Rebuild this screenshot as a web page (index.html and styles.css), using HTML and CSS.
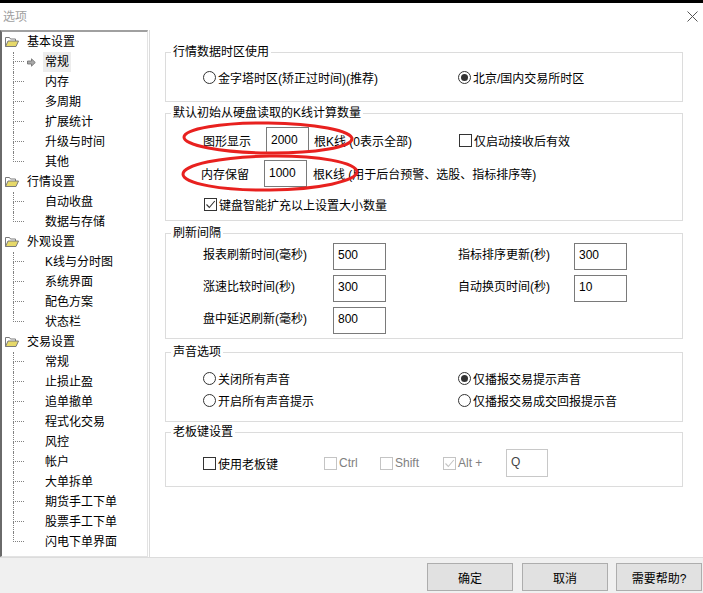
FILE: index.html
```html
<!DOCTYPE html>
<html lang="zh-CN">
<head>
<meta charset="utf-8">
<title>选项</title>
<link rel="stylesheet" href="styles.css">
</head>
<body>
<div class="topstrip"></div>
<div class="titlebar">
  <span class="title">选项</span>
  <svg class="close" width="11" height="11" viewBox="0 0 11 11"><path d="M0.5 0.5L10.5 10.5M10.5 0.5L0.5 10.5" stroke="#555" stroke-width="1" fill="none"/></svg>
</div>
<div class="main">
  <div class="tree">
    <div class="parent"><svg class="folder" width="14" height="10" viewBox="0 0 14 10"><path d="M0.5 9.5V0.5h4l1 1.5h5v2" fill="#fff" stroke="#7a7a7a"/><path d="M0.5 9.5L3 4h10.5L11 9.5z" fill="#e6d96a" stroke="#7a7a7a"/></svg>基本设置</div>
    <ul class="children">
      <li class="child"><span class="conn"><i></i><i></i></span><span class="ico"><svg width="9" height="9" viewBox="0 0 9 9"><path d="M0.5 3h4V0.8L8.3 4.5 4.5 8.2V6h-4z" fill="#a8a8a8" stroke="#6a6a6a" stroke-width="0.8"/></svg></span><span class="lbl sel">常规</span></li>
      <li class="child"><span class="conn"><i></i><i></i></span><span class="ico"></span><span class="lbl">内存</span></li>
      <li class="child"><span class="conn"><i></i><i></i></span><span class="ico"></span><span class="lbl">多周期</span></li>
      <li class="child"><span class="conn"><i></i><i></i></span><span class="ico"></span><span class="lbl">扩展统计</span></li>
      <li class="child"><span class="conn"><i></i><i></i></span><span class="ico"></span><span class="lbl">升级与时间</span></li>
      <li class="child last"><span class="conn"><i></i><i></i></span><span class="ico"></span><span class="lbl">其他</span></li>
    </ul>
    <div class="parent"><svg class="folder" width="14" height="10" viewBox="0 0 14 10"><path d="M0.5 9.5V0.5h4l1 1.5h5v2" fill="#fff" stroke="#7a7a7a"/><path d="M0.5 9.5L3 4h10.5L11 9.5z" fill="#e6d96a" stroke="#7a7a7a"/></svg>行情设置</div>
    <ul class="children">
      <li class="child"><span class="conn"><i></i><i></i></span><span class="ico"></span><span class="lbl">自动收盘</span></li>
      <li class="child last"><span class="conn"><i></i><i></i></span><span class="ico"></span><span class="lbl">数据与存储</span></li>
    </ul>
    <div class="parent"><svg class="folder" width="14" height="10" viewBox="0 0 14 10"><path d="M0.5 9.5V0.5h4l1 1.5h5v2" fill="#fff" stroke="#7a7a7a"/><path d="M0.5 9.5L3 4h10.5L11 9.5z" fill="#e6d96a" stroke="#7a7a7a"/></svg>外观设置</div>
    <ul class="children">
      <li class="child"><span class="conn"><i></i><i></i></span><span class="ico"></span><span class="lbl">K线与分时图</span></li>
      <li class="child"><span class="conn"><i></i><i></i></span><span class="ico"></span><span class="lbl">系统界面</span></li>
      <li class="child"><span class="conn"><i></i><i></i></span><span class="ico"></span><span class="lbl">配色方案</span></li>
      <li class="child last"><span class="conn"><i></i><i></i></span><span class="ico"></span><span class="lbl">状态栏</span></li>
    </ul>
    <div class="parent"><svg class="folder" width="14" height="10" viewBox="0 0 14 10"><path d="M0.5 9.5V0.5h4l1 1.5h5v2" fill="#fff" stroke="#7a7a7a"/><path d="M0.5 9.5L3 4h10.5L11 9.5z" fill="#e6d96a" stroke="#7a7a7a"/></svg>交易设置</div>
    <ul class="children">
      <li class="child"><span class="conn"><i></i><i></i></span><span class="ico"></span><span class="lbl">常规</span></li>
      <li class="child"><span class="conn"><i></i><i></i></span><span class="ico"></span><span class="lbl">止损止盈</span></li>
      <li class="child"><span class="conn"><i></i><i></i></span><span class="ico"></span><span class="lbl">追单撤单</span></li>
      <li class="child"><span class="conn"><i></i><i></i></span><span class="ico"></span><span class="lbl">程式化交易</span></li>
      <li class="child"><span class="conn"><i></i><i></i></span><span class="ico"></span><span class="lbl">风控</span></li>
      <li class="child"><span class="conn"><i></i><i></i></span><span class="ico"></span><span class="lbl">帐户</span></li>
      <li class="child"><span class="conn"><i></i><i></i></span><span class="ico"></span><span class="lbl">大单拆单</span></li>
      <li class="child"><span class="conn"><i></i><i></i></span><span class="ico"></span><span class="lbl">期货手工下单</span></li>
      <li class="child"><span class="conn"><i></i><i></i></span><span class="ico"></span><span class="lbl">股票手工下单</span></li>
      <li class="child last"><span class="conn"><i></i><i></i></span><span class="ico"></span><span class="lbl">闪电下单界面</span></li>
    </ul>
  </div>

  <div class="content">
    <fieldset class="grp g1">
      <legend>行情数据时区使用</legend>
      <div class="two">
        <label class="opt"><span class="radio"></span>金字塔时区(矫正过时间)(推荐)</label>
        <label class="opt"><span class="radio on"></span>北京/国内交易所时区</label>
      </div>
    </fieldset>

    <fieldset class="grp g2">
      <legend>默认初始从硬盘读取的K线计算数量</legend>
      <div class="krow k1">
        <span class="klbl">图形显示</span>
        <span class="box kbox">2000</span>
        <span class="ktxt">根K线 (0表示全部)</span>
        <label class="opt"><span class="check"></span>仅启动接收后有效</label>
      </div>
      <div class="krow k2">
        <span class="klbl">内存保留</span>
        <span class="box kbox">1000</span>
        <span class="ktxt">根K线 (用于后台预警、选股、指标排序等)</span>
      </div>
      <div class="crow">
        <label class="opt"><span class="check"><svg width="11" height="11" viewBox="0 0 11 11"><path d="M1.5 5.5l2.8 3L9.8 2" fill="none" stroke="#333" stroke-width="1.1"/></svg></span>键盘智能扩充以上设置大小数量</label>
      </div>
    </fieldset>

    <fieldset class="grp g3">
      <legend>刷新间隔</legend>
      <div class="refresh">
        <span class="rl">报表刷新时间(毫秒)</span><span class="box rbox">500</span><span></span>
        <span class="rl">指标排序更新(秒)</span><span class="box rbox">300</span>
        <span class="rl">涨速比较时间(秒)</span><span class="box rbox">300</span><span></span>
        <span class="rl">自动换页时间(秒)</span><span class="box rbox">10</span>
        <span class="rl">盘中延迟刷新(毫秒)</span><span class="box rbox">800</span>
      </div>
    </fieldset>

    <fieldset class="grp g4">
      <legend>声音选项</legend>
      <div class="two">
        <label class="opt"><span class="radio"></span>关闭所有声音</label>
        <label class="opt"><span class="radio on"></span>仅播报交易提示声音</label>
        <label class="opt"><span class="radio"></span>开启所有声音提示</label>
        <label class="opt"><span class="radio"></span>仅播报交易成交回报提示音</label>
      </div>
    </fieldset>

    <fieldset class="grp g5">
      <legend>老板键设置</legend>
      <div class="boss">
        <label class="opt use"><span class="check"></span>使用老板键</label>
        <label class="opt dis ctrl"><span class="check"></span>Ctrl</label>
        <label class="opt dis shift"><span class="check"></span>Shift</label>
        <label class="opt dis alt"><span class="check"><svg width="11" height="11" viewBox="0 0 11 11"><path d="M1.5 5.5l2.8 3L9.8 2" fill="none" stroke="#c4c4c4" stroke-width="1.1"/></svg></span>Alt +</label>
        <span class="box qbox">Q</span>
      </div>
    </fieldset>
  </div>
</div>
<div class="footer">
  <button class="btn">确定</button>
  <button class="btn">取消</button>
  <button class="btn">需要帮助?</button>
</div>
<svg class="marks" width="703" height="593" viewBox="0 0 703 593">
  <ellipse cx="268" cy="138" rx="84" ry="15" fill="none" stroke="#e8211f" stroke-width="3" transform="rotate(0.6 268 138)"/>
  <ellipse cx="270" cy="173" rx="87" ry="17" fill="none" stroke="#e8211f" stroke-width="3" transform="rotate(-0.8 270 173)"/>
</svg>
</body>
</html>
```

FILE: styles.css
```css
* { box-sizing: border-box; }
html, body { margin: 0; padding: 0; }
body {
  width: 703px;
  height: 593px;
  overflow: hidden;
  position: relative;
  background: #fff;
  color: #000;
  font-family: "Liberation Sans", "Noto Sans CJK SC", sans-serif;
  font-size: 12px;
}

.topstrip { height: 3px; background: #000; }

.titlebar {
  height: 27px;
  display: flex;
  align-items: center;
  justify-content: space-between;
  padding: 0 5px 0 3px;
}
.title { color: #a0a0a0; font-size: 12px; line-height: 14px; }
.close { display: block; }

.main { display: flex; height: 527px; }

/* ---------- tree ---------- */
.tree {
  width: 148px;
  height: 527px;
  border-top: 2px solid #a0a0a0;
  border-left: 2px solid #6a6a6a;
  border-right: 1px solid #e3e3e3;
  border-bottom: 1px solid #e3e3e3;
  background: #fff;
}
.parent {
  height: 20px;
  display: flex;
  align-items: center;
  padding-left: 3px;
  line-height: 20px;
}
.folder { display: block; margin-right: 8px; }
.children { list-style: none; margin: 0; padding: 0; }
.child { height: 20px; display: flex; align-items: stretch; }
.conn {
  margin-left: 11px;
  width: 11px;
  display: flex;
  flex-direction: column;
}
.conn i { display: block; height: 10px; border-left: 1px dotted #808080; }
.conn i:first-child { border-bottom: 1px dotted #808080; }
.child.last .conn i:last-child { border-left: none; }
.ico { width: 19px; display: flex; align-items: center; padding-left: 3px; }
.ico svg { display: block; }
.lbl { padding: 0 2px; line-height: 20px; }
.lbl.sel { background: #ededed; }

/* ---------- content ---------- */
.content {
  flex: 1;
  margin-left: 1px;
  border-left: 1px solid #dcdcdc;
  padding: 16px 20px 0 15px;
}
.grp {
  margin: 0;
  padding: 0;
  width: 518px;
  min-width: 0;
  border: 1px solid #dcdcdc;
}
.grp legend {
  margin-left: 5px;
  padding: 0 2px;
  line-height: 13px;
  font-size: 12px;
}
.g2 { margin-top: 5px; }
.g3 { margin-top: 6px; }
.g4 { margin-top: 7px; }
.g5 { margin-top: 4px; }

.opt { display: flex; align-items: center; white-space: nowrap; }
.radio {
  width: 13px; height: 13px;
  border: 1px solid #333;
  border-radius: 50%;
  background: #fff;
  margin-right: 2px;
  display: inline-flex;
  align-items: center;
  justify-content: center;
  flex: none;
}
.radio.on::after {
  content: "";
  width: 7px; height: 7px;
  border-radius: 50%;
  background: #333;
}
.check {
  width: 13px; height: 13px;
  border: 1px solid #333;
  background: #fff;
  margin-right: 2px;
  display: inline-flex;
  align-items: center;
  justify-content: center;
  flex: none;
}
.check svg { display: block; }

.box {
  display: flex;
  align-items: center;
  border: 1px solid #7a7a7a;
  background: #fff;
  padding: 0 0 3px 4px;
}

.two {
  display: grid;
  grid-template-columns: 255px 1fr;
  padding-left: 37px;
}
.two .opt { height: 20px; }
.g1 .two { padding-top: 8px; padding-bottom: 14px; }
.g4 .two { padding-top: 9px; padding-bottom: 11px; row-gap: 2px; }

.g2 { padding-top: 7px; padding-bottom: 7px; }
.krow { display: flex; align-items: center; height: 27px; }
.k1 { padding-left: 37px; height: 26px; }
.k2 { padding-left: 35px; margin-top: 7px; }
.klbl { width: 63px; }
.kbox { width: 43px; height: 100%; padding-bottom: 1px; }
.k1 .ktxt { margin-left: 5px; width: 145px; }
.k2 .ktxt { margin-left: 6px; }
.crow { padding-left: 38px; margin-top: 8px; height: 18px; display: flex; align-items: center; }

.refresh {
  display: grid;
  grid-template-columns: 130px 53px 72px 116px 53px;
  grid-auto-rows: 27px;
  row-gap: 5px;
  padding: 3px 0 4px 37px;
  align-items: center;
}
.rl { line-height: 27px; padding-bottom: 2px; }
.rbox { height: 27px; }

.boss {
  display: flex;
  align-items: center;
  height: 28px;
  padding-left: 37px;
  margin: 10px 0 9px;
}
.use { width: 121px; }
.ctrl { width: 56px; }
.shift { width: 63px; }
.alt { width: 63px; }
.dis { color: #808080; }
.dis .check { border-color: #c4c4c4; }
.qbox {
  width: 42px; height: 28px;
  border-color: #c8c8c8;
  color: #444;
}

/* ---------- footer ---------- */
.footer {
  height: 36px;
  border-top: 1px solid #dcdcdc;
  background: #f0f0f0;
  display: flex;
  justify-content: flex-end;
  align-items: flex-start;
  padding: 5px 1px 0 0;
  gap: 8px;
}
.btn {
  width: 86px;
  height: 28px;
  border: 1px solid #adadad;
  background: #e1e1e1;
  font-family: "Liberation Sans", "Noto Sans CJK SC", sans-serif;
  font-size: 12px;
  color: #000;
  padding: 0;
  margin: 0;
}
.btn:first-child { margin-right: 1px; }

.marks { position: absolute; left: 0; top: 0; pointer-events: none; }
```
